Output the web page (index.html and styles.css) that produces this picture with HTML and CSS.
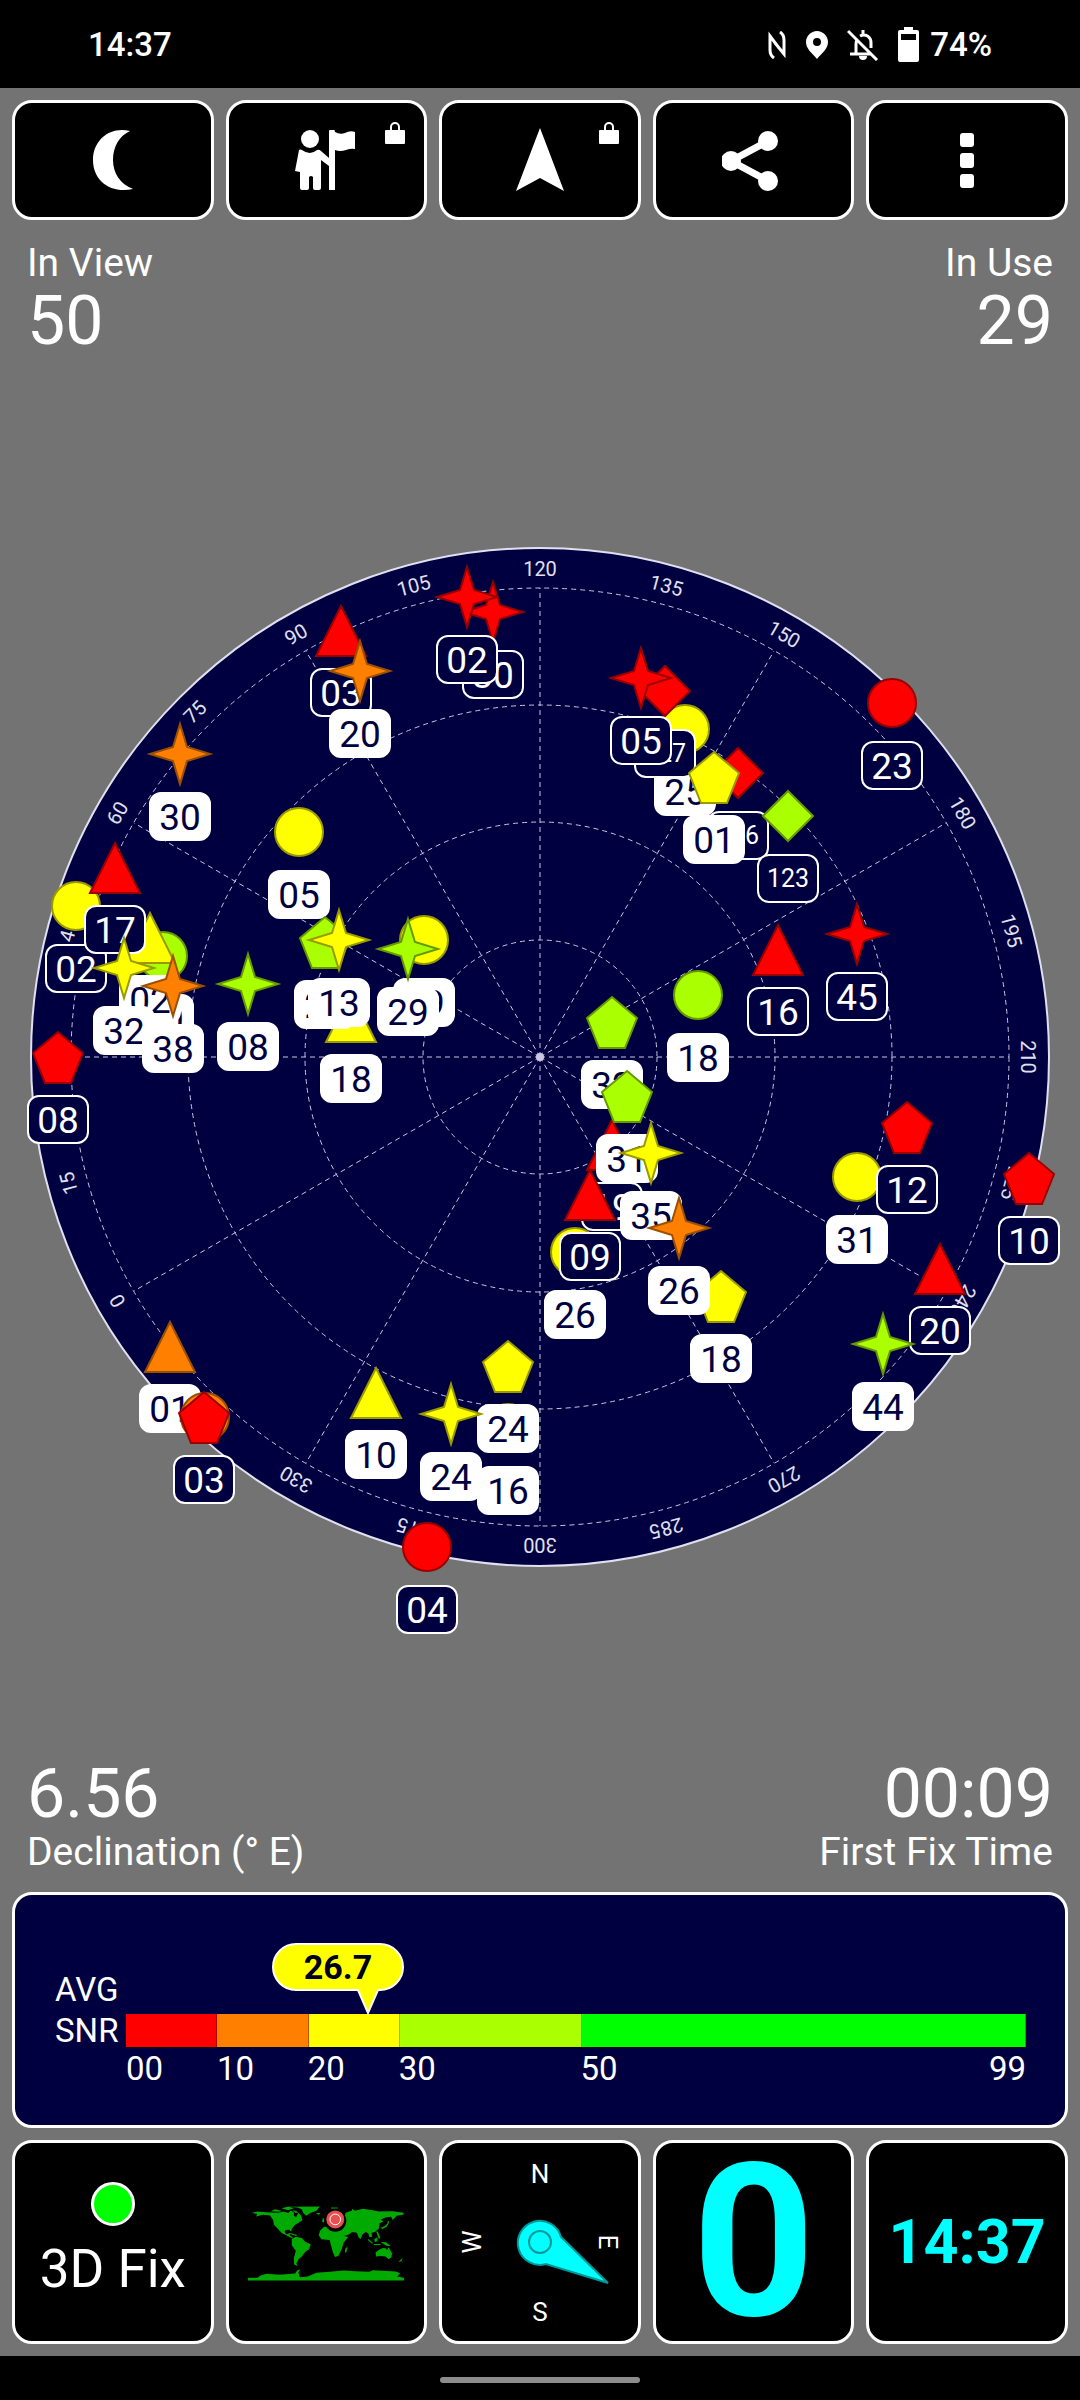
FILE: index.html
```html
<!DOCTYPE html>
<html lang="en">
<head>
<meta charset="utf-8">
<meta name="viewport" content="width=device-width, initial-scale=1">
<title>GPS Satellites</title>
<link rel="stylesheet" href="styles.css">
</head>
<body>
<div class="screen">
  <header class="status">
    <span>14:37</span>
    <div class="status-icons">
      <svg width="20" height="28" viewBox="0 0 20 28" fill="none" stroke="#fff" stroke-width="3"><path d="M7 27C4 25 3 22 3 19V5l9 12M13 1c3 2 4 5 4 8v14L8 12"/></svg>
      <svg width="22" height="28" viewBox="0 0 22 28" fill="#fff"><path fill-rule="evenodd" d="M11 0C5 0 0 5 0 11c0 7 6 11 11 17 5-6 11-10 11-17C22 5 17 0 11 0zm0 7a4 4 0 1 1 0 8 4 4 0 0 1 0-8z"/></svg>
      <svg width="32" height="32" viewBox="0 0 32 32" fill="none" stroke="#fff" stroke-width="3"><path d="M1 2l29 29M3 25h21M9 24V15c0-2 0-3 1-4M13 7c6-3 11 1 11 7v5M16 5V1"/><path d="M12 27h8a4 4 0 0 1-8 0z" fill="#fff" stroke="none"/></svg>
      <svg width="21" height="36" viewBox="0 0 21 36" fill="#fff"><path fill-rule="evenodd" d="M6 0h9v3h4a2 2 0 0 1 2 2v28a2 2 0 0 1-2 2H2a2 2 0 0 1-2-2V5a2 2 0 0 1 2-2h4zM3 7v6h15V7z"/></svg>
      <span class="battery-text">74%</span>
    </div>
  </header>

  <main class="app">
    <nav class="row toolbar">
      <button class="tile" type="button" aria-label="Night mode">
        <svg width="64" height="64" viewBox="0 0 64 64" fill="#fff"><path d="M49 3C30-2 12 11 12 32s18 34 40 29C39 56 32 45 32 32S38 8 49 3z"/></svg>
      </button>
      <button class="tile" type="button" aria-label="Waypoints">
        <svg width="64" height="64" viewBox="0 0 64 64" fill="#fff"><circle cx="16" cy="11" r="9"/><path d="M5 22q1-1 3 0 8 6 15 0 2-1 4 1l8 7v8l-8-6v28q0 2-2 2h-4q-2 0-2-2V49q-2-2-4 0v11q0 2-2 2H8q-2 0-2-2V44l-5-1z"/><path d="M35 3q0-1 1-1h4q1 0 1 2 5 3 10 1 5-3 10-1v17q-4-1-9 1-6 2-11 0v40h-6z"/></svg>
        <svg class="lock" width="20" height="23" viewBox="0 0 20 23"><path d="M6 10V6a4 4 0 0 1 8 0v4" fill="none" stroke="#fff" stroke-width="2"/><rect y="9" width="20" height="14" rx="1" fill="#fff"/></svg>
      </button>
      <button class="tile" type="button" aria-label="Navigate">
        <svg width="64" height="64" viewBox="0 0 64 64" fill="#fff"><path d="M32 0l24 63-24-13L8 63z"/></svg>
        <svg class="lock" width="20" height="23" viewBox="0 0 20 23"><path d="M6 10V6a4 4 0 0 1 8 0v4" fill="none" stroke="#fff" stroke-width="2"/><rect y="9" width="20" height="14" rx="1" fill="#fff"/></svg>
      </button>
      <button class="tile" type="button" aria-label="Share">
        <svg width="64" height="64" viewBox="0 0 64 64" fill="#fff"><path d="M46 13L9 33l37 20" fill="none" stroke="#fff" stroke-width="7"/><circle cx="9" cy="33" r="10"/><circle cx="46" cy="13" r="10"/><circle cx="46" cy="53" r="10"/></svg>
      </button>
      <button class="tile" type="button" aria-label="More options">
        <svg width="64" height="64" viewBox="0 0 64 64" fill="#fff"><rect x="25" y="5" width="14" height="14" rx="3"/><rect x="25" y="25" width="14" height="15" rx="3"/><rect x="25" y="46" width="14" height="14" rx="3"/></svg>
      </button>
    </nav>

    <section class="stats stats-top">
      <div><p class="label">In View</p><p class="value">50</p></div>
      <div class="right"><p class="label">In Use</p><p class="value">29</p></div>
    </section>

    <section class="sky">
      <svg class="plot" viewBox="0 478 1080 1160" role="img" aria-label="Satellite sky view">
        <defs>
          <g id="circle"><circle r="24"/></g>
          <g id="star"><path d="M0-30L7-7 30 0 7 7 0 30-7 7-30 0-7-7z"/></g>
          <g id="tri"><path d="M0-24L25 26H-25z"/></g>
          <g id="penta"><path d="M0-25L25-4 13 26H-13L-25-4z"/></g>
          <g id="diamond"><path d="M0-25L25 0 0 25-25 0z"/></g>
          <rect id="tag" x="-30" y="39" width="60" height="47" rx="11"/>
        </defs>
        <circle class="disc" cx="540" cy="1057" r="509"/>
        <g class="grid">
          <circle cx="540" cy="1057" r="117"/><circle cx="540" cy="1057" r="235"/><circle cx="540" cy="1057" r="352"/><circle cx="540" cy="1057" r="469"/>
          <path d="M540 1057V588M540 1057V1526M540 1057H71M540 1057H1009M540 1057L306 651M540 1057L774 651M540 1057L306 1463M540 1057L774 1463M540 1057L134 823M540 1057L946 823M540 1057L134 1291M540 1057L946 1291"/>
        </g>
        <circle cx="540" cy="1057" r="4" fill="#c8c8e0"/>
        <g class="azimuth" transform="translate(540 1057)">
          <text y="-481">120</text>
          <text y="-481" transform="rotate(15)">135</text>
          <text y="-481" transform="rotate(30)">150</text>
          <text y="-481" transform="rotate(60)">180</text>
          <text y="-481" transform="rotate(75)">195</text>
          <text y="-481" transform="rotate(90)">210</text>
          <text y="-481" transform="rotate(105)">225</text>
          <text y="-481" transform="rotate(120)">240</text>
          <text y="-481" transform="rotate(150)">270</text>
          <text y="-481" transform="rotate(165)">285</text>
          <text y="-481" transform="rotate(180)">300</text>
          <text y="-481" transform="rotate(195)">315</text>
          <text y="-481" transform="rotate(210)">330</text>
          <text y="-481" transform="rotate(240)">0</text>
          <text y="-481" transform="rotate(255)">15</text>
          <text y="-481" transform="rotate(285)">45</text>
          <text y="-481" transform="rotate(300)">60</text>
          <text y="-481" transform="rotate(315)">75</text>
          <text y="-481" transform="rotate(330)">90</text>
          <text y="-481" transform="rotate(345)">105</text>
        </g>

        <g class="sat red idle" transform="translate(493 612)"><use href="#star"/><use class="tag" href="#tag"/><text y="76">30</text></g>
        <g class="sat red idle" transform="translate(467 597)"><use href="#star"/><use class="tag" href="#tag"/><text y="76">02</text></g>
        <g class="sat red idle" transform="translate(341 630)"><use href="#tri"/><use class="tag" href="#tag"/><text y="76">03</text></g>
        <g class="sat orange used" transform="translate(360 671)"><use href="#star"/><use class="tag" href="#tag"/><text y="76">20</text></g>
        <g class="sat orange used" transform="translate(180 754)"><use href="#star"/><use class="tag" href="#tag"/><text y="76">30</text></g>
        <g class="sat yellow used" transform="translate(299 832)"><use href="#circle"/><use class="tag" href="#tag"/><text y="76">05</text></g>

        <g class="sat yellow idle" transform="translate(76 906)"><use href="#circle"/><use class="tag" href="#tag"/><text y="76">02</text></g>
        <g class="sat lime used" transform="translate(163 956)"><use href="#circle"/><use class="tag" href="#tag"/><text y="76">30</text></g>
        <g class="sat yellow used" transform="translate(150 937)"><use href="#tri"/><use class="tag" href="#tag"/><text y="76">02</text></g>
        <g class="sat red idle" transform="translate(115 867)"><use href="#tri"/><use class="tag" href="#tag"/><text y="76">17</text></g>
        <g class="sat yellow used" transform="translate(124 968)"><use href="#star"/><use class="tag" href="#tag"/><text y="76">32</text></g>
        <g class="sat orange used" transform="translate(173 986)"><use href="#star"/><use class="tag" href="#tag"/><text y="76">38</text></g>
        <g class="sat lime used" transform="translate(248 984)"><use href="#star"/><use class="tag" href="#tag"/><text y="76">08</text></g>
        <g class="sat red idle" transform="translate(58 1057)"><use href="#penta"/><use class="tag" href="#tag"/><text y="76">08</text></g>

        <g class="sat yellow used" transform="translate(351 1016)"><use href="#tri"/><use class="tag" href="#tag"/><text y="76">18</text></g>
        <g class="sat lime used" transform="translate(325 942)"><use href="#penta"/><use class="tag" href="#tag"/><text y="76">26</text></g>
        <g class="sat yellow used" transform="translate(339 940)"><use href="#star"/><use class="tag" href="#tag"/><text y="76">13</text></g>
        <g class="sat yellow used" transform="translate(424 940)"><use href="#circle"/><use class="tag" href="#tag"/><text y="76">19</text></g>
        <g class="sat lime used" transform="translate(408 949)"><use href="#star"/><use class="tag" href="#tag"/><text y="76">29</text></g>

        <g class="sat yellow used" transform="translate(685 729)"><use href="#circle"/><use class="tag" href="#tag"/><text y="76">25</text></g>
        <g class="sat red idle" transform="translate(665 691)"><use href="#diamond"/><use class="tag" href="#tag"/><text class="long" y="71">127</text></g>
        <g class="sat red idle" transform="translate(641 678)"><use href="#star"/><use class="tag" href="#tag"/><text y="76">05</text></g>
        <g class="sat red idle" transform="translate(738 773)"><use href="#diamond"/><use class="tag" href="#tag"/><text class="long" y="71">126</text></g>
        <g class="sat yellow used" transform="translate(714 777)"><use href="#penta"/><use class="tag" href="#tag"/><text y="76">01</text></g>
        <g class="sat lime idle" transform="translate(788 816)"><use href="#diamond"/><use class="tag" href="#tag"/><text class="long" y="71">123</text></g>
        <g class="sat red idle" transform="translate(892 703)"><use href="#circle"/><use class="tag" href="#tag"/><text y="76">23</text></g>
        <g class="sat red idle" transform="translate(857 934)"><use href="#star"/><use class="tag" href="#tag"/><text y="76">45</text></g>
        <g class="sat red idle" transform="translate(778 949)"><use href="#tri"/><use class="tag" href="#tag"/><text y="76">16</text></g>
        <g class="sat lime used" transform="translate(698 995)"><use href="#circle"/><use class="tag" href="#tag"/><text y="76">18</text></g>

        <g class="sat yellow used" transform="translate(575 1252)"><use href="#circle"/><use class="tag" href="#tag"/><text y="76">26</text></g>
        <g class="sat red idle" transform="translate(612 1144)"><use href="#tri"/><use class="tag" href="#tag"/><text y="76">19</text></g>
        <g class="sat red idle" transform="translate(590 1194)"><use href="#tri"/><use class="tag" href="#tag"/><text y="76">09</text></g>
        <g class="sat lime used" transform="translate(612 1022)"><use href="#penta"/><use class="tag" href="#tag"/><text y="76">32</text></g>
        <g class="sat lime used" transform="translate(627 1096)"><use href="#penta"/><use class="tag" href="#tag"/><text y="76">31</text></g>
        <g class="sat yellow used" transform="translate(651 1153)"><use href="#star"/><use class="tag" href="#tag"/><text y="76">35</text></g>
        <g class="sat yellow used" transform="translate(721 1296)"><use href="#penta"/><use class="tag" href="#tag"/><text y="76">18</text></g>
        <g class="sat orange used" transform="translate(679 1228)"><use href="#star"/><use class="tag" href="#tag"/><text y="76">26</text></g>

        <g class="sat yellow used" transform="translate(857 1177)"><use href="#circle"/><use class="tag" href="#tag"/><text y="76">31</text></g>
        <g class="sat red idle" transform="translate(907 1127)"><use href="#penta"/><use class="tag" href="#tag"/><text y="76">12</text></g>
        <g class="sat red idle" transform="translate(1029 1178)"><use href="#penta"/><use class="tag" href="#tag"/><text y="76">10</text></g>
        <g class="sat red idle" transform="translate(940 1268)"><use href="#tri"/><use class="tag" href="#tag"/><text y="76">20</text></g>
        <g class="sat lime used" transform="translate(883 1344)"><use href="#star"/><use class="tag" href="#tag"/><text y="76">44</text></g>

        <g class="sat orange used" transform="translate(170 1346)"><use href="#tri"/><use class="tag" href="#tag"/><text y="76">01</text></g>
        <g class="sat orange" transform="translate(205 1417)"><use href="#circle"/></g>
        <g class="sat red idle" transform="translate(204 1417)"><use href="#penta"/><use class="tag" href="#tag"/><text y="76">03</text></g>
        <g class="sat yellow used" transform="translate(376 1392)"><use href="#tri"/><use class="tag" href="#tag"/><text y="76">10</text></g>
        <g class="sat yellow used" transform="translate(508 1428)"><use href="#circle"/><use class="tag" href="#tag"/><text y="76">16</text></g>
        <g class="sat yellow used" transform="translate(508 1366)"><use href="#penta"/><use class="tag" href="#tag"/><text y="76">24</text></g>
        <g class="sat yellow used" transform="translate(451 1414)"><use href="#star"/><use class="tag" href="#tag"/><text y="76">24</text></g>
        <g class="sat red idle" transform="translate(427 1547)"><use href="#circle"/><use class="tag" href="#tag"/><text y="76">04</text></g>
      </svg>
    </section>

    <section class="stats stats-bottom">
      <div><p class="value">6.56</p><p class="label">Declination (° E)</p></div>
      <div class="right"><p class="value">00:09</p><p class="label">First Fix Time</p></div>
    </section>

    <section class="snr">
      <div class="snr-name">AVG<br>SNR</div>
      <div class="meter">
        <div class="bar">
          <div class="seg bad"></div><div class="seg poor"></div><div class="seg fair"></div><div class="seg good"></div><div class="seg great"></div>
          <div class="bubble">
            <svg width="132" height="74" viewBox="0 0 132 74"><path d="M24 2H108a22 22 0 0 1 0 46H106L96 71 86 48H24a22 22 0 0 1 0-46z" fill="#ff0" stroke="#fff" stroke-width="2"/></svg>
            <span>26.7</span>
          </div>
        </div>
        <div class="scale"><span>00</span><span>10</span><span>20</span><span>30</span><span class="last"><span>50</span><span>99</span></span></div>
      </div>
    </section>

    <nav class="row tabs">
      <button class="tile fix" type="button"><span class="led"></span><span>3D Fix</span></button>
      <button class="tile" type="button" aria-label="World map">
        <svg width="156" height="90" viewBox="84 51 470 270">
          <g fill="#00aa00">
            <path d="M84 96L95 99 112 94 150 97 175 98 190 94 205 99 212 92 222 95 222 106 228 112 236 98 244 106 248 120 238 127 226 134 216 146 214 155 208 149 197 150 194 156 200 163 208 160 212 168 220 172 214 174 200 166 186 160 176 148 162 134 160 120 150 106 130 104 108 109 112 102z"/>
            <path d="M152 93L165 87 185 92 178 95zM185 84L206 79 222 84 204 90zM218 90L228 92 236 97 228 99zM205 80L300 79 290 92 272 99 259 107 250 98 246 87 232 82zM288 99L302 99 297 104zM334 82h20v3h-20zM307 124L310 112 315 120 312 128z"/>
            <path d="M207 158L232 165 229 168 208 161zM216 176L228 170 246 174 256 185 273 193 268 208 256 216 246 230 236 238 230 250 233 258 223 254 222 236 228 212 216 196z"/>
            <path d="M301 152L312 141 330 138 344 148 366 150 374 168 386 171 372 188 366 208 356 228 346 231 340 218 334 196 330 180 305 178 297 166zM377 206L384 199 381 215 376 219z"/>
            <path d="M378 98L396 92 398 86 406 92 430 86 460 90 478 94 520 93 554 98 551 104 532 107 520 120 515 110 498 112 484 118 492 124 480 130 478 146 466 156 456 158 458 170 450 172 446 160 438 156 428 164 424 176 418 174 412 158 398 156 386 164 374 168 364 152 370 144 360 138 372 124z"/>
            <path d="M484 143L496 138 504 130 506 120 509 128 502 140 488 147zM446 176L460 188 458 191 446 181zM464 178L474 172 474 184 466 186zM484 186L500 187 514 198 500 197zM463 192h20v3h-20zM470 154h5l8 20-5 2z"/>
            <path d="M468 218L478 210 490 204 498 205 503 210 507 202 518 220 516 232 508 238 498 230 484 228 470 230zM541 242L550 234 546 244 538 246z"/>
            <path d="M84 302V294H112L122 287 140 282 180 285 226 281 232 272 242 268 236 277 240 292 264 290 290 279 330 276 372 272 408 274 450 276 460 271 530 275 542 280 534 290 554 294V302z"/>
          </g>
          <circle cx="347" cy="122" r="33" fill="#000"/><circle cx="347" cy="118" r="27" fill="#e85050"/><circle cx="347" cy="118" r="16" fill="none" stroke="#fff" stroke-width="3"/>
        </svg>
      </button>
      <button class="tile" type="button" aria-label="Compass">
        <svg class="compass" width="190" height="180" viewBox="-95 -90 190 180">
          <text y="-59">N</text><text y="79">S</text><text y="-59" transform="rotate(90)">E</text><text y="-59" transform="rotate(-90)">W</text>
          <path d="M21-5A22 22 0 1 0 6 22L68 41z" fill="#0ff" stroke="#009999" stroke-width="2"/><circle r="11" fill="none" stroke="#009999" stroke-width="2"/>
        </svg>
      </button>
      <button class="tile speed" type="button">0</button>
      <button class="tile clock" type="button">14:37</button>
    </nav>
  </main>

  <footer class="gesture"><span class="pill"></span></footer>
</div>
</body>
</html>
```
FILE: styles.css
```css
* { box-sizing: border-box; }
body { margin: 0; background: #000; color: #fff; font-family: Roboto, "Liberation Sans", sans-serif; }
p { margin: 0; }
svg { display: block; }
.screen { min-height: 100vh; display: flex; flex-direction: column; }

.status { height: 88px; padding: 2px 88px 0 88px; background: #000; display: flex; align-items: center; justify-content: space-between; font-size: 33px; line-height: 32px; font-weight: 500; }
.status-icons { display: flex; align-items: center; gap: 19px; }
.battery-text { margin-left: -8px; }

.app { flex: 1; display: flex; flex-direction: column; padding: 12px; background: #737373; }
.row { display: grid; grid-template-columns: repeat(5, 1fr); gap: 12px; }
.tile { position: relative; display: flex; align-items: center; justify-content: center; padding: 0; border: 3px solid #fff; border-radius: 20px; background: #000; color: #fff; font-family: inherit; }
.toolbar .tile { height: 120px; }
.lock { position: absolute; top: 18px; right: 19px; }

.stats { display: flex; justify-content: space-between; padding: 0 15px; }
.stats-top { padding-top: 21px; }
.stats-bottom { padding-bottom: 18px; }
.right { text-align: right; }
.label { font-size: 39px; line-height: 44px; }
.value { font-size: 68px; line-height: 72px; }

.sky { flex: 1; display: flex; align-items: center; margin: 0 -12px; }
.plot { width: 100%; height: auto; }
.disc { fill: #000040; stroke: #e0e0f0; stroke-width: 2; }
.grid { fill: none; stroke: #c8c8e0; stroke-width: 1; stroke-dasharray: 5 4; }
.azimuth { fill: #e0e0f0; font-size: 20px; text-anchor: middle; }
.sat { stroke-width: 2; font-size: 37px; text-anchor: middle; }
.red { fill: #f00; stroke: #900; }
.orange { fill: #ff8000; stroke: #995000; }
.yellow { fill: #ff0; stroke: #990; }
.lime { fill: #af0; stroke: #690; }
.sat text { stroke: none; }
.sat .long { font-size: 25px; }
.used .tag { fill: #fff; stroke: #fff; }
.used text { fill: #000040; }
.idle .tag { fill: #000040; stroke: #fff; }
.idle text { fill: #fff; }

.snr { display: grid; grid-template-columns: 71px 1fr; align-items: start; padding: 74px 39px 37px 40px; border: 3px solid #fff; border-radius: 20px; background: #000040; margin-bottom: 12px; }
.snr-name { line-height: 41px; font-size: 33px; }
.meter { padding-top: 45px; }
.bar { position: relative; display: flex; height: 34px; border-bottom: 1px solid #000; }
.seg { flex: 10 1 0; border-right: 1px solid rgba(0, 0, 0, .3); }
.bad { background: #f00; }
.poor { background: #ff8000; }
.fair { background: #ff0; }
.good { background: #af0; flex-grow: 20; }
.great { background: #0f0; flex-grow: 49; }
.bubble { position: absolute; left: 27%; bottom: 31px; margin-left: -97px; }
.bubble span { position: absolute; top: 0; left: 0; right: 0; text-align: center; color: #000020; font-size: 34px; font-weight: 700; line-height: 50px; }
.scale { display: flex; line-height: 42px; font-size: 33px; }
.scale > span { flex: 10 1 0; }
.scale > span:nth-child(4) { flex-grow: 20; }
.scale > .last { flex-grow: 49; display: flex; justify-content: space-between; }
.snr { padding-bottom: 35px; }

.tabs .tile { height: 204px; }
.fix { flex-direction: column; gap: 10px; font-size: 53px; line-height: 66px; }
.led { width: 44px; height: 44px; border: 3px solid #fff; border-radius: 50%; background: #0f0; }
.compass { fill: #fff; font-size: 26px; text-anchor: middle; }
.speed { color: #0ff; font-size: 214px; line-height: 198px; font-weight: 700; }
.clock { color: #0ff; font-size: 61px; font-weight: 700; }

.gesture { height: 44px; background: #000; display: flex; align-items: center; justify-content: center; padding-top: 4px; }
.pill { width: 200px; height: 6px; border-radius: 3px; background: #8c8c8c; }
```
